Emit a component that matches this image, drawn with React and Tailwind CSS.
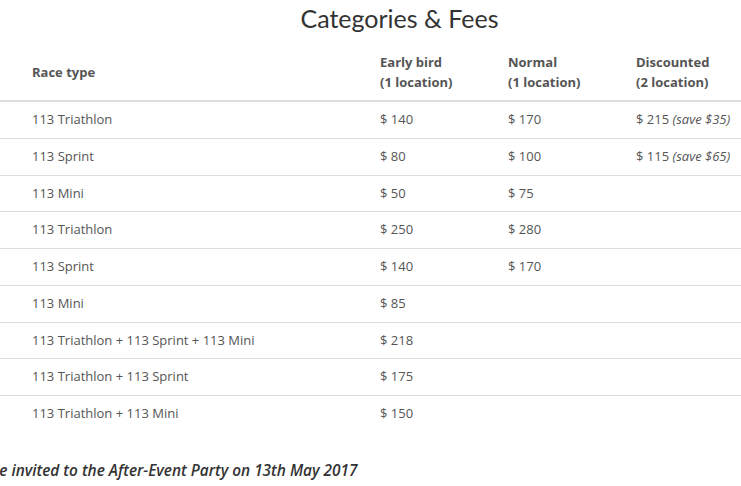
const rows = [
  ["113 Triathlon", "$ 140", "$ 170", ["$ 215", "save $35"]],
  ["113 Sprint", "$ 80", "$ 100", ["$ 115", "save $65"]],
  ["113 Mini", "$ 50", "$ 75", null],
  ["113 Triathlon", "$ 250", "$ 280", null],
  ["113 Sprint", "$ 140", "$ 170", null],
  ["113 Mini", "$ 85", "", null],
  ["113 Triathlon + 113 Sprint + 113 Mini", "$ 218", "", null],
  ["113 Triathlon + 113 Sprint", "$ 175", "", null],
  ["113 Triathlon + 113 Mini", "$ 150", "", null],
];

export default function App() {
  return (
    <div className="w-[741px] h-[486px] overflow-hidden bg-white text-[#555] font-['Open_Sans',sans-serif]">
      <h2 className="pl-[58px] text-center text-[25px] leading-[30px] pt-[3px] text-[#333] font-['Lato',sans-serif] font-normal">
        Categories &amp; Fees
      </h2>

      <table className="mt-[11px] w-[760px] border-collapse text-[13px]">
        <thead>
          <tr className="border-b-2 border-[#ddd] text-[#555]">
            <th className="w-[372px] pl-8 py-2 text-left align-middle font-bold leading-5">Race type</th>
            <th className="w-[128px] px-2 py-2 text-left font-bold leading-5">
              Early bird<br />(1 location)
            </th>
            <th className="w-[128px] px-2 py-2 text-left font-bold leading-5">
              Normal<br />(1 location)
            </th>
            <th className="px-2 py-2 text-left font-bold leading-5">
              Discounted<br />(2 location)
            </th>
          </tr>
        </thead>
        <tbody>
          {rows.map((r, i) => (
            <tr key={i} className={i > 0 ? "border-t border-[#ddd]" : ""}>
              <td className="pl-8 py-2 leading-[19.75px]">{r[0]}</td>
              <td className="px-2 py-2 leading-[19.75px]">{r[1]}</td>
              <td className="px-2 py-2 leading-[19.75px]">{r[2]}</td>
              <td className="px-2 py-2 leading-[19.75px] whitespace-nowrap">
                {r[3] && (
                  <>
                    {r[3][0]} <em className="text-[13px]">({r[3][1]})</em>
                  </>
                )}
              </td>
            </tr>
          ))}
        </tbody>
      </table>

      <p className="mt-[28px] -ml-[46px] whitespace-nowrap text-[15.4px] leading-[22px] font-semibold italic text-[#333]">
        You are invited to the After-Event Party on 13th May 2017
      </p>
    </div>
  );
}
